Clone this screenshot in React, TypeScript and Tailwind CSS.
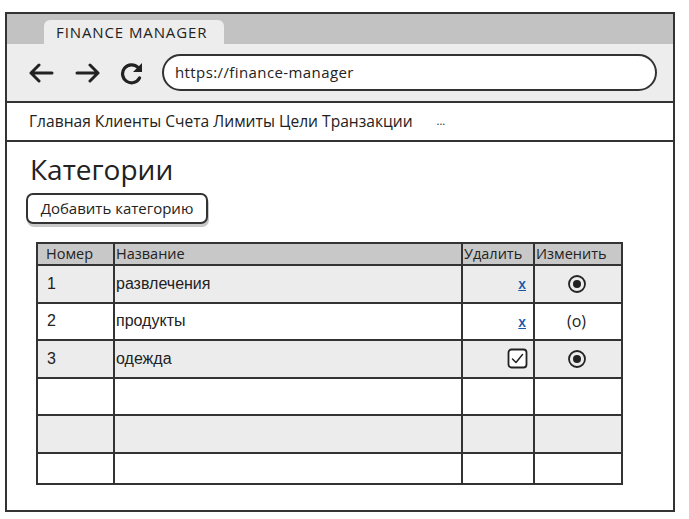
import React from 'react';

const sketchFont = { fontFamily: '"Open Sans", "Noto Sans", sans-serif' };

type Row = {
  num: string;
  name: string;
  del: 'link' | 'check' | null;
  edit: 'radio' | 'text' | null;
};

const ROWS: Row[] = [
  { num: '1', name: 'развлечения', del: 'link', edit: 'radio' },
  { num: '2', name: 'продукты', del: 'link', edit: 'text' },
  { num: '3', name: 'одежда', del: 'check', edit: 'radio' },
  { num: '', name: '', del: null, edit: null },
  { num: '', name: '', del: null, edit: null },
  { num: '', name: '', del: null, edit: null },
];

function RadioOn() {
  return (
    <svg width="20" height="20" viewBox="0 0 20 20">
      <circle cx="10" cy="10" r="8" fill="none" stroke="#222" strokeWidth="1.8" />
      <circle cx="10" cy="10" r="4" fill="#222" />
    </svg>
  );
}

function CheckBox() {
  return (
    <svg width="21" height="21" viewBox="0 0 21 21">
      <rect x="1.5" y="1.5" width="18" height="18" rx="3" fill="#fff" stroke="#222" strokeWidth="1.8" />
      <path d="M5.5 11 L9 14.5 L15.5 6.5" fill="none" stroke="#222" strokeWidth="1.5" strokeLinecap="round" strokeLinejoin="round" />
    </svg>
  );
}

export default function App() {
  return (
    <div className="h-[519px] w-[689px] bg-white pl-[5px] pt-[12px]" style={sketchFont}>
      <div className="flex h-[500px] w-[670px] flex-col border-2 border-[#333] bg-white text-[#222]">
        {/* tab strip */}
        <div className="flex h-[30px] items-end bg-[#c2c2c2] pl-[37px]">
          <div className="flex h-[24px] w-[180px] items-center rounded-t-[6px] bg-[#ededed] pl-[12px] text-[15px] tracking-[0.9px] text-[#222]">
            FINANCE MANAGER
          </div>
        </div>

        {/* toolbar */}
        <div className="flex h-[59px] items-center border-b-2 border-[#333] bg-[#ededed] pl-[21px] pr-[16px]">
          <svg width="26" height="20" viewBox="0 0 26 20" className="mr-[21px]">
            <path d="M24 10 H3 M11 2 L3 10 L11 18" fill="none" stroke="#222" strokeWidth="3" strokeLinecap="round" strokeLinejoin="round" />
          </svg>
          <svg width="26" height="20" viewBox="0 0 26 20" className="mr-[19px]">
            <path d="M2 10 H23 M15 2 L23 10 L15 18" fill="none" stroke="#222" strokeWidth="3" strokeLinecap="round" strokeLinejoin="round" />
          </svg>
          <svg width="24" height="24" viewBox="0 0 24 24" className="mr-[18px]">
            <path d="M18 6.5 A9 9 0 1 0 19.5 17" fill="none" stroke="#222" strokeWidth="3.2" strokeLinecap="round" />
            <path d="M22 2 L22 11 L13 11 Z" fill="#222" />
          </svg>
          <div className="flex h-[37px] flex-1 items-center rounded-full border-2 border-[#333] bg-white pl-[11px] text-[15px] tracking-[0.4px]">
            https://finance-manager
          </div>
        </div>

        {/* nav */}
        <div className="flex h-[39px] items-center gap-[24px] border-b-2 border-[#333] pl-[22px] text-[15.6px]">
          <span>Главная Клиенты Счета Лимиты Цели Транзакции</span>
          <span className="text-[11px]">...</span>
        </div>

        {/* content */}
        <div className="flex flex-col pl-[19px]">
          <h1 className="mt-[10px] pl-[4px] text-[28px] leading-[35px]">Категории</h1>
          <button
            type="button"
            className="mt-[6px] h-[31px] w-[182px] rounded-[7px] border-2 border-[#333] bg-white text-[15px] shadow-[1px_3px_0_#c8c8c8]"
          >
            Добавить категорию
          </button>

          <div className="ml-[10px] mt-[18px] w-[587px] border-2 border-[#333]" style={{ fontFamily: '"Liberation Sans", Arial, sans-serif' }}>
            <div className="grid h-[20px] grid-cols-[77px_348px_72px_1fr] bg-[#c8c8c8] text-[14.5px]" style={sketchFont}>
              <div className="flex items-center border-r-2 border-[#333] pl-[8px] leading-none">Номер</div>
              <div className="flex items-center border-r-2 border-[#333] pl-[1px] leading-none">Название</div>
              <div className="flex items-center border-r-2 border-[#333] pl-[1px] leading-none">Удалить</div>
              <div className="flex items-center pl-[1px] leading-none">Изменить</div>
            </div>
            {ROWS.map((row, i) => (
              <div
                key={i}
                className={`grid grid-cols-[77px_348px_72px_1fr] border-t-2 border-[#333] text-[16px] ${
                  i % 2 === 0 ? 'bg-[#ececec]' : 'bg-white'
                } ${i === 5 ? 'h-[31px]' : 'h-[37.5px]'}`}
              >
                <div className="flex items-center border-r-2 border-[#333] pl-[9px]">{row.num}</div>
                <div className="flex items-center border-r-2 border-[#333] pl-[1px]">{row.name}</div>
                <div className="flex items-center justify-end border-r-2 border-[#333] pr-[5px]">
                  {row.del === 'link' && (
                    <span className="pr-[2px] text-[14px] font-semibold text-[#1a56a8] underline" style={sketchFont}>
                      x
                    </span>
                  )}
                  {row.del === 'check' && <CheckBox />}
                </div>
                <div className="flex items-center justify-center pr-[3px]">
                  {row.edit === 'radio' && <RadioOn />}
                  {row.edit === 'text' && <span style={sketchFont}>(o)</span>}
                </div>
              </div>
            ))}
          </div>
        </div>
      </div>
    </div>
  );
}
